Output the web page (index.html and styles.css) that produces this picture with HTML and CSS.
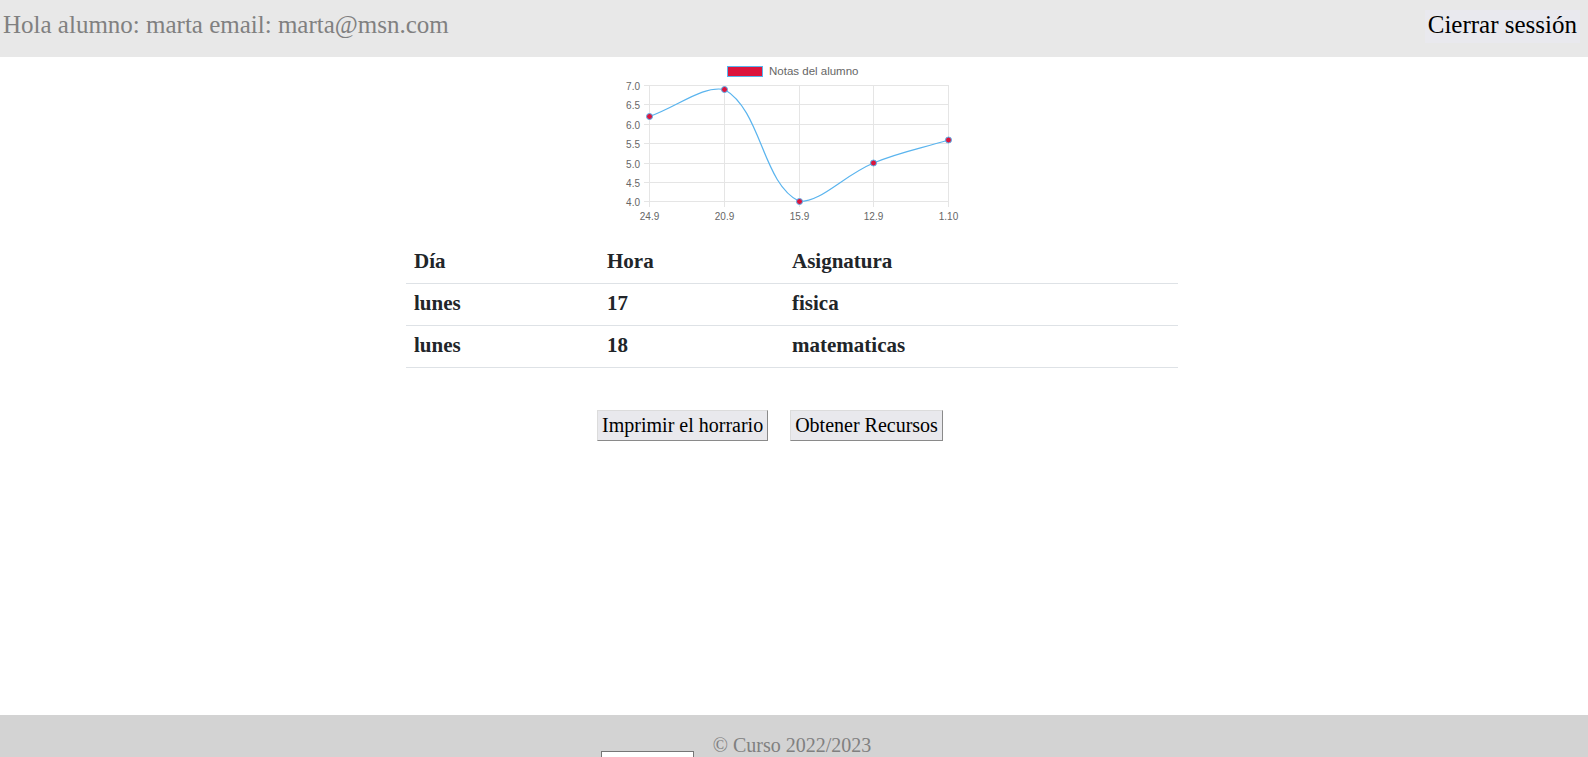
FILE: index.html
```html
<!DOCTYPE html>
<html lang="es">
<head>
<meta charset="utf-8">
<title>Alumno</title>
<link rel="stylesheet" href="styles.css">
</head>
<body>
<header class="topbar">
  <div class="greeting">Hola alumno: marta email: marta@msn.com</div>
  <button class="logout">Cierrar sessión</button>
</header>

<main class="main">
  <div class="chart-wrap">
    <svg class="chart" width="400" height="170" viewBox="594 57 400 170" xmlns="http://www.w3.org/2000/svg">
      <g class="legend">
        <rect x="727.5" y="66.5" width="35" height="10" fill="#dc143c" stroke="#5ab4ee" stroke-width="1"/>
        <text x="769" y="74.5" class="legend-text">Notas del alumno</text>
      </g>
      <g class="grid" stroke="#e5e5e5" stroke-width="1" shape-rendering="crispEdges">
        <line x1="644" y1="85.5" x2="949" y2="85.5"/>
        <line x1="644" y1="104.5" x2="949" y2="104.5"/>
        <line x1="644" y1="124.5" x2="949" y2="124.5"/>
        <line x1="644" y1="143.5" x2="949" y2="143.5"/>
        <line x1="644" y1="163.5" x2="949" y2="163.5"/>
        <line x1="644" y1="182.5" x2="949" y2="182.5"/>
        <line x1="644" y1="201.5" x2="949" y2="201.5"/>
        <line x1="649.5" y1="85" x2="649.5" y2="207"/>
        <line x1="724.5" y1="85" x2="724.5" y2="207"/>
        <line x1="799.5" y1="85" x2="799.5" y2="207"/>
        <line x1="873.5" y1="85" x2="873.5" y2="207"/>
        <line x1="948.5" y1="85" x2="948.5" y2="207"/>
      </g>
      <g class="ylabels">
        <text x="640" y="89.5">7.0</text>
        <text x="640" y="108.5">6.5</text>
        <text x="640" y="128.5">6.0</text>
        <text x="640" y="147.5">5.5</text>
        <text x="640" y="167.5">5.0</text>
        <text x="640" y="186.5">4.5</text>
        <text x="640" y="205.5">4.0</text>
      </g>
      <g class="xlabels">
        <text x="649.5" y="220">24.9</text>
        <text x="724.5" y="220">20.9</text>
        <text x="799.5" y="220">15.9</text>
        <text x="873.5" y="220">12.9</text>
        <text x="948.5" y="220">1.10</text>
      </g>
      <path d="M649.5,116.5 C679.4,105.7 702.1,85.5 724.5,89.5 C761.9,110.9 762.2,183.8 799.5,201.5 C822,201.5 842.8,176.1 873.5,163 C902.6,151.2 918.6,149.2 948.5,140" fill="none" stroke="#5ab4ee" stroke-width="1.2"/>
      <g class="points" fill="#dc143c" stroke="#5ab4ee" stroke-width="1">
        <circle cx="649.5" cy="116.5" r="3"/>
        <circle cx="724.5" cy="89.5" r="3"/>
        <circle cx="799.5" cy="201.5" r="3"/>
        <circle cx="873.5" cy="163" r="3"/>
        <circle cx="948.5" cy="140" r="3"/>
      </g>
    </svg>
  </div>

  <div class="table-wrap">
    <table class="schedule">
      <colgroup>
        <col class="c1">
        <col class="c2">
        <col class="c3">
      </colgroup>
      <thead>
        <tr><th>Día</th><th>Hora</th><th>Asignatura</th></tr>
      </thead>
      <tbody>
        <tr><td>lunes</td><td>17</td><td>fisica</td></tr>
        <tr><td>lunes</td><td>18</td><td>matematicas</td></tr>
      </tbody>
    </table>
  </div>

  <div class="actions">
    <button class="action">Imprimir el horrario</button>
    <button class="action">Obtener Recursos</button>
  </div>
</main>

<footer class="footer">
  <p class="copy">© Curso 2022/2023</p>
  <div class="lang-select">Idioma: Español</div>
</footer>
</body>
</html>
```
FILE: styles.css
```css
html, body {
  margin: 0;
  padding: 0;
  background: #ffffff;
}

body {
  font-family: "Liberation Serif", "Times New Roman", serif;
  overflow: hidden;
}

.topbar {
  height: 57px;
  box-sizing: border-box;
  background: #e8e8e8;
  display: flex;
  justify-content: space-between;
  align-items: flex-start;
  padding: 10px 8px 0 3px;
}

.greeting {
  font-size: 25px;
  line-height: 28px;
  color: #808080;
  padding-top: 1px;
}

.logout {
  font-family: "Liberation Serif", "Times New Roman", serif;
  font-size: 25px;
  line-height: 28px;
  color: #000;
  background: #e9e9ee;
  border: none;
  padding: 1px 3px 4px 3px;
  margin: 0;
  cursor: pointer;
}

.main {
  min-height: 658px;
}

.chart-wrap {
  display: flex;
  justify-content: center;
}

.chart {
  display: block;
}

.legend-text {
  font-family: "Liberation Sans", Arial, sans-serif;
  font-size: 11.5px;
  fill: #666;
}

.ylabels text {
  font-family: "Liberation Sans", Arial, sans-serif;
  font-size: 10px;
  fill: #666;
  text-anchor: end;
}

.xlabels text {
  font-family: "Liberation Sans", Arial, sans-serif;
  font-size: 10px;
  fill: #666;
  text-anchor: middle;
}

.table-wrap {
  margin-top: 15px;
  padding-right: 4px;
}

.schedule {
  width: 772px;
  margin: 0 auto;
  border-collapse: collapse;
  table-layout: fixed;
  color: #212529;
}

.schedule .c1 { width: 193px; }
.schedule .c2 { width: 185px; }

.schedule th,
.schedule td {
  font-size: 21px;
  font-weight: bold;
  line-height: 25px;
  text-align: left;
  padding: 7px 8px 9px 8px;
}

.schedule tr {
  border-bottom: 1px solid #dee2e6;
}

.schedule thead tr {
  border-bottom: 1px solid #dee2e6;
}

.actions {
  display: flex;
  justify-content: center;
  gap: 22px;
  margin-top: 42px;
  padding-right: 48px;
}

.action {
  font-family: "Liberation Serif", "Times New Roman", serif;
  font-size: 20px;
  line-height: 23px;
  color: #000;
  background: #e9e9ed;
  padding: 3px 4px;
  margin: 0;
  border-style: solid;
  border-width: 1px;
  border-color: #dcdcdc #8a8a8a #8a8a8a #dcdcdc;
  cursor: pointer;
}

.footer {
  background: #d3d3d3;
  padding-top: 21px;
  height: 80px;
  box-sizing: border-box;
}

.copy {
  margin: 0;
  text-align: center;
  font-size: 20px;
  line-height: 18px;
  color: #808080;
  padding-right: 4px;
}

.lang-select {
  margin-top: -3px;
  margin-left: 601px;
  width: 91px;
  height: 22px;
  border: 1px solid #767676;
  background: #fff;
  font-family: "Liberation Sans", Arial, sans-serif;
  font-size: 13px;
  line-height: 20px;
  padding-left: 5px;
  box-sizing: border-box;
  width: 93px;
  color: #000;
}
```
